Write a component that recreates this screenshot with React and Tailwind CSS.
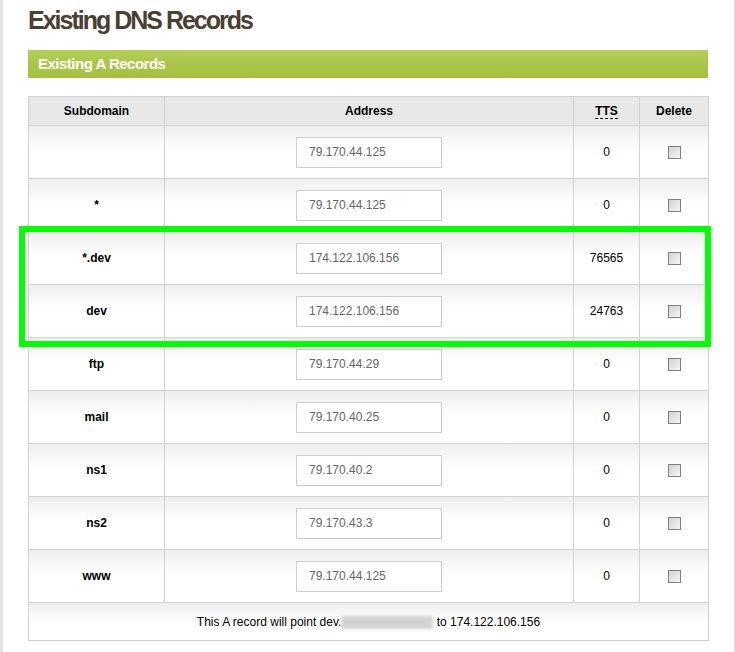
import React from "react";

const rows = [
  { sub: "", addr: "79.170.44.125", tts: "0" },
  { sub: "*", addr: "79.170.44.125", tts: "0" },
  { sub: "*.dev", addr: "174.122.106.156", tts: "76565" },
  { sub: "dev", addr: "174.122.106.156", tts: "24763" },
  { sub: "ftp", addr: "79.170.44.29", tts: "0" },
  { sub: "mail", addr: "79.170.40.25", tts: "0" },
  { sub: "ns1", addr: "79.170.40.2", tts: "0" },
  { sub: "ns2", addr: "79.170.43.3", tts: "0" },
  { sub: "www", addr: "79.170.44.125", tts: "0" },
];

function Check() {
  return (
    <span className="inline-block w-[13px] h-[13px] border border-[#808080] bg-linear-to-br from-[#d2d2d2] to-[#f6f6f6] align-middle" />
  );
}

export default function App() {
  return (
    <div
      className="relative flex w-[735px] h-[652px] bg-white overflow-hidden"
      style={{ fontFamily: '"Liberation Sans", Arial, sans-serif' }}
    >
      <div className="w-[3px] bg-[#e4e4e4] shrink-0" />
      <div className="flex-1 pl-[25px] pr-[25px]">
        <h1 className="mt-[6px] leading-[28px] text-[25px] font-bold text-[#4b3e33] tracking-[-2px]">
          Existing DNS Records
        </h1>
        <div className="mt-[16px] w-[680px] h-[28px] bg-linear-to-b from-[#b3cf55] to-[#a2bf3e] pl-[10px] flex items-center">
          <span className="text-white font-bold text-[15px] tracking-[-0.5px]">
            Existing A Records
          </span>
        </div>
        <table className="mt-[18px] w-[680px] border-collapse table-fixed text-[12px] text-black">
          <colgroup>
            <col className="w-[136px]" />
            <col className="w-[409px]" />
            <col className="w-[66px]" />
            <col className="w-[69px]" />
          </colgroup>
          <thead>
            <tr className="h-[29px] bg-[#e8e8e8]">
              <th className="border border-[#d2d2d2] font-bold">Subdomain</th>
              <th className="border border-[#d2d2d2] font-bold">Address</th>
              <th className="border border-[#d2d2d2] font-bold">
                <abbr className="no-underline border-b border-dashed border-black pb-0">TTS</abbr>
              </th>
              <th className="border border-[#d2d2d2] font-bold">Delete</th>
            </tr>
          </thead>
          <tbody>
            {rows.map((r, i) => (
              <tr key={i} className="h-[53px] bg-linear-to-b from-[#eeeeee] from-0% to-white to-45%">
                <td className="border border-[#d2d2d2] text-center font-bold">{r.sub}</td>
                <td className="border border-[#d2d2d2] text-center">
                  <div className="mx-auto w-[146px] h-[31px] border border-[#cccccc] bg-white flex items-center pl-[12px] text-[12px] text-[#666666]">
                    {r.addr}
                  </div>
                </td>
                <td className="border border-[#d2d2d2] text-center">{r.tts}</td>
                <td className="border border-[#d2d2d2] text-center">
                  <Check />
                </td>
              </tr>
            ))}
            <tr className="h-[38px] bg-linear-to-b from-[#eeeeee] from-0% to-white to-50%">
              <td colSpan={4} className="border border-[#d2d2d2] text-center">
                This A record will point dev.
                <span className="inline-block align-middle w-[92px] h-[13px] bg-[#c9c9c9] blur-[1.5px] opacity-80" />
                {" "}to 174.122.106.156
              </td>
            </tr>
          </tbody>
        </table>
      </div>
      <div className="w-[2px] bg-[#e4e4e4] shrink-0" />
      <div className="absolute left-[19px] top-[226px] w-[692px] h-[121px] border-[6px] border-[#00ff00] pointer-events-none" />
    </div>
  );
}
